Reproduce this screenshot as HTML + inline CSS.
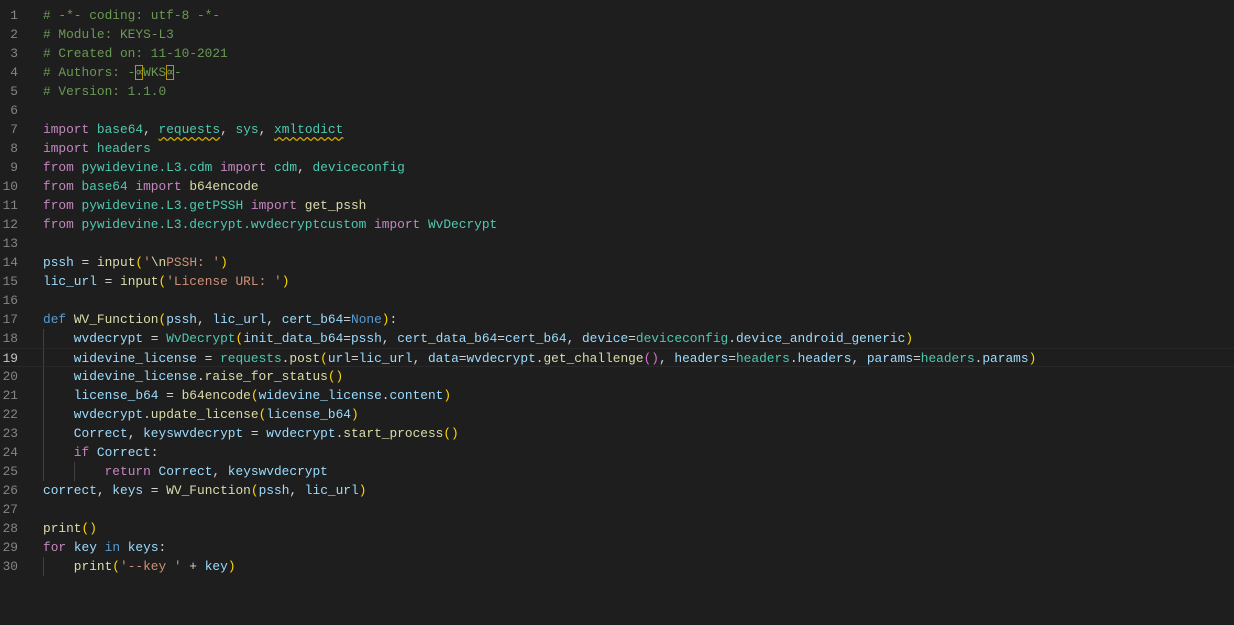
<!DOCTYPE html>
<html><head><meta charset="utf-8"><style>
html,body{margin:0;padding:0;background:#1e1e1e;width:1234px;height:625px;overflow:hidden}
.ed{position:absolute;left:0;top:6px;width:1234px;font-family:"Liberation Mono",monospace;font-size:12.83px;color:#d4d4d4}
.l{position:relative;height:19px;line-height:19px;white-space:pre}
.n{position:absolute;left:0;width:18px;text-align:right;color:#858585}
.t{position:absolute;left:43px}
.cur{border-top:1px solid #282828;border-bottom:1px solid #282828;box-sizing:border-box;height:19px}
.cur .n{color:#c6c6c6}
.c{color:#6a9955}.k{color:#c586c0}.m{color:#4ec9b0}.v{color:#9cdcfe}.f{color:#dcdcaa}.s{color:#ce9178}.b{color:#569cd6}.y{color:#ffd700}.p{color:#da70d6}
.g{position:absolute;width:1px;background:#404040}
.sq{text-decoration:underline wavy #cca700;text-underline-offset:3px}
.box{outline:1px solid #b89500;outline-offset:-1px}
</style></head><body>
<div class="g" style="left:43px;top:329px;height:152px"></div>
<div class="g" style="left:74px;top:462px;height:19px"></div>
<div class="g" style="left:43px;top:557px;height:19px"></div>
<div class="ed">
<div class="l"><span class="n">1</span><span class="t c"># -*- coding: utf-8 -*-</span></div>
<div class="l"><span class="n">2</span><span class="t c"># Module: KEYS-L3</span></div>
<div class="l"><span class="n">3</span><span class="t c"># Created on: 11-10-2021</span></div>
<div class="l"><span class="n">4</span><span class="t c"># Authors: -<span class="box">∝</span>WKS<span class="box">∝</span>-</span></div>
<div class="l"><span class="n">5</span><span class="t c"># Version: 1.1.0</span></div>
<div class="l"><span class="n">6</span></div>
<div class="l"><span class="n">7</span><span class="t"><span class="k">import</span> <span class="m">base64</span>, <span class="m sq">requests</span>, <span class="m">sys</span>, <span class="m sq">xmltodict</span></span></div>
<div class="l"><span class="n">8</span><span class="t"><span class="k">import</span> <span class="m">headers</span></span></div>
<div class="l"><span class="n">9</span><span class="t"><span class="k">from</span> <span class="m">pywidevine.L3.cdm</span> <span class="k">import</span> <span class="m">cdm</span>, <span class="m">deviceconfig</span></span></div>
<div class="l"><span class="n">10</span><span class="t"><span class="k">from</span> <span class="m">base64</span> <span class="k">import</span> <span class="f">b64encode</span></span></div>
<div class="l"><span class="n">11</span><span class="t"><span class="k">from</span> <span class="m">pywidevine.L3.getPSSH</span> <span class="k">import</span> <span class="f">get_pssh</span></span></div>
<div class="l"><span class="n">12</span><span class="t"><span class="k">from</span> <span class="m">pywidevine.L3.decrypt.wvdecryptcustom</span> <span class="k">import</span> <span class="m">WvDecrypt</span></span></div>
<div class="l"><span class="n">13</span></div>
<div class="l"><span class="n">14</span><span class="t"><span class="v">pssh</span> = <span class="f">input</span><span class="y">(</span><span class="s">'</span><span class="f">\n</span><span class="s">PSSH: '</span><span class="y">)</span></span></div>
<div class="l"><span class="n">15</span><span class="t"><span class="v">lic_url</span> = <span class="f">input</span><span class="y">(</span><span class="s">'License URL: '</span><span class="y">)</span></span></div>
<div class="l"><span class="n">16</span></div>
<div class="l"><span class="n">17</span><span class="t"><span class="b">def</span> <span class="f">WV_Function</span><span class="y">(</span><span class="v">pssh</span>, <span class="v">lic_url</span>, <span class="v">cert_b64</span>=<span class="b">None</span><span class="y">)</span>:</span></div>
<div class="l"><span class="n">18</span><span class="t">    <span class="v">wvdecrypt</span> = <span class="m">WvDecrypt</span><span class="y">(</span><span class="v">init_data_b64</span>=<span class="v">pssh</span>, <span class="v">cert_data_b64</span>=<span class="v">cert_b64</span>, <span class="v">device</span>=<span class="m">deviceconfig</span>.<span class="v">device_android_generic</span><span class="y">)</span></span></div>
<div class="l cur"><span class="n">19</span><span class="t">    <span class="v">widevine_license</span> = <span class="m">requests</span>.<span class="f">post</span><span class="y">(</span><span class="v">url</span>=<span class="v">lic_url</span>, <span class="v">data</span>=<span class="v">wvdecrypt</span>.<span class="f">get_challenge</span><span class="p">()</span>, <span class="v">headers</span>=<span class="m">headers</span>.<span class="v">headers</span>, <span class="v">params</span>=<span class="m">headers</span>.<span class="v">params</span><span class="y">)</span></span></div>
<div class="l"><span class="n">20</span><span class="t">    <span class="v">widevine_license</span>.<span class="f">raise_for_status</span><span class="y">()</span></span></div>
<div class="l"><span class="n">21</span><span class="t">    <span class="v">license_b64</span> = <span class="f">b64encode</span><span class="y">(</span><span class="v">widevine_license</span>.<span class="v">content</span><span class="y">)</span></span></div>
<div class="l"><span class="n">22</span><span class="t">    <span class="v">wvdecrypt</span>.<span class="f">update_license</span><span class="y">(</span><span class="v">license_b64</span><span class="y">)</span></span></div>
<div class="l"><span class="n">23</span><span class="t">    <span class="v">Correct</span>, <span class="v">keyswvdecrypt</span> = <span class="v">wvdecrypt</span>.<span class="f">start_process</span><span class="y">()</span></span></div>
<div class="l"><span class="n">24</span><span class="t">    <span class="k">if</span> <span class="v">Correct</span>:</span></div>
<div class="l"><span class="n">25</span><span class="t">        <span class="k">return</span> <span class="v">Correct</span>, <span class="v">keyswvdecrypt</span></span></div>
<div class="l"><span class="n">26</span><span class="t"><span class="v">correct</span>, <span class="v">keys</span> = <span class="f">WV_Function</span><span class="y">(</span><span class="v">pssh</span>, <span class="v">lic_url</span><span class="y">)</span></span></div>
<div class="l"><span class="n">27</span></div>
<div class="l"><span class="n">28</span><span class="t"><span class="f">print</span><span class="y">()</span></span></div>
<div class="l"><span class="n">29</span><span class="t"><span class="k">for</span> <span class="v">key</span> <span class="b">in</span> <span class="v">keys</span>:</span></div>
<div class="l"><span class="n">30</span><span class="t">    <span class="f">print</span><span class="y">(</span><span class="s">'--key '</span> + <span class="v">key</span><span class="y">)</span></span></div>
</div>
</body></html>
